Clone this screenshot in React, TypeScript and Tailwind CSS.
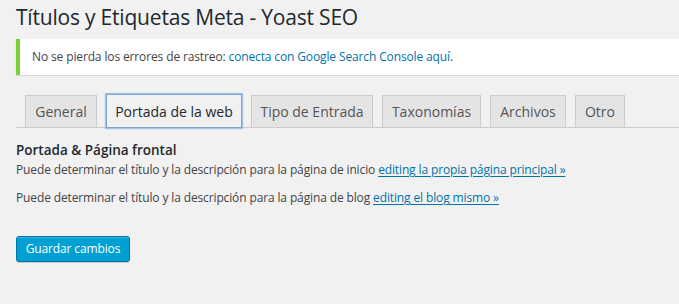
import React from "react";

const tabs = [
  { label: "General", w: "w-[72px]" },
  { label: "Portada de la web", w: "w-[136px]", active: true },
  { label: "Tipo de Entrada", w: "w-[122px]" },
  { label: "Taxonomías", w: "w-[99px]" },
  { label: "Archivos", w: "w-[76px]" },
  { label: "Otro", w: "w-[50px]" },
];

export default function App() {
  return (
    <div className="min-h-[304px] w-[679px] overflow-hidden bg-[#f1f1f1] font-['Open_Sans',sans-serif] text-[12px] tracking-[-0.13px] text-[#444]">
      <h1 className="pl-4 pt-[3px] text-[21px] font-normal leading-[29px] tracking-[-0.2px] text-[#23282d]">
        Títulos y Etiquetas Meta - Yoast SEO
      </h1>

      <div className="ml-4 mt-[7px] flex h-[36px] items-center border-l-4 border-[#7ad03a] bg-white pl-3 shadow-[0_1px_1px_0_rgba(0,0,0,0.1)]">
        <p>
          No se pierda los errores de rastreo:{" "}
          <a href="#" className="text-[#0073aa]">
            conecta con Google Search Console aquí
          </a>
          .
        </p>
      </div>

      <div className="ml-4 mt-[20px] flex h-[33px] items-end gap-[9px] border-b border-[#ccc] pl-[9px] tracking-normal">
        {tabs.map((t) =>
          t.active ? (
            <div
              key={t.label}
              className={`${t.w} -mb-px flex h-[34px] items-center justify-center border border-[#80a8cd] bg-[#f1f1f1] text-[14px] text-[#23282d] shadow-[0_0_1px_1px_rgba(91,157,217,0.55)]`}
            >
              {t.label}
            </div>
          ) : (
            <div
              key={t.label}
              className={`${t.w} flex h-[32px] items-center justify-center border border-b-0 border-[#ccc] bg-[#e4e4e4] text-[14px] text-[#555]`}
            >
              {t.label}
            </div>
          )
        )}
      </div>

      <div className="px-4 pt-[12px]">
        <h2 className="text-[13.5px] font-semibold leading-[20px] tracking-normal text-[#23282d]">
          Portada &amp; Página frontal
        </h2>
        <p className="leading-[20px]">
          Puede determinar el título y la descripción para la página de inicio{" "}
          <a href="#" className="text-[#0073aa] underline underline-offset-2">
            editing la propia página principal »
          </a>
        </p>
        <p className="mt-[8px] leading-[20px]">
          Puede determinar el título y la descripción para la página de blog{" "}
          <a href="#" className="text-[#0073aa] underline underline-offset-2">
            editing el blog mismo »
          </a>
        </p>
        <button className="mt-[28px] flex h-[26px] w-[114px] items-center justify-center rounded-[3px] border border-[#0073aa] bg-[#00a0d2] text-[12px] text-white shadow-[inset_0_1px_0_rgba(120,200,230,0.5),0_1px_0_rgba(0,0,0,0.15)]">
          Guardar cambios
        </button>
      </div>
    </div>
  );
}
